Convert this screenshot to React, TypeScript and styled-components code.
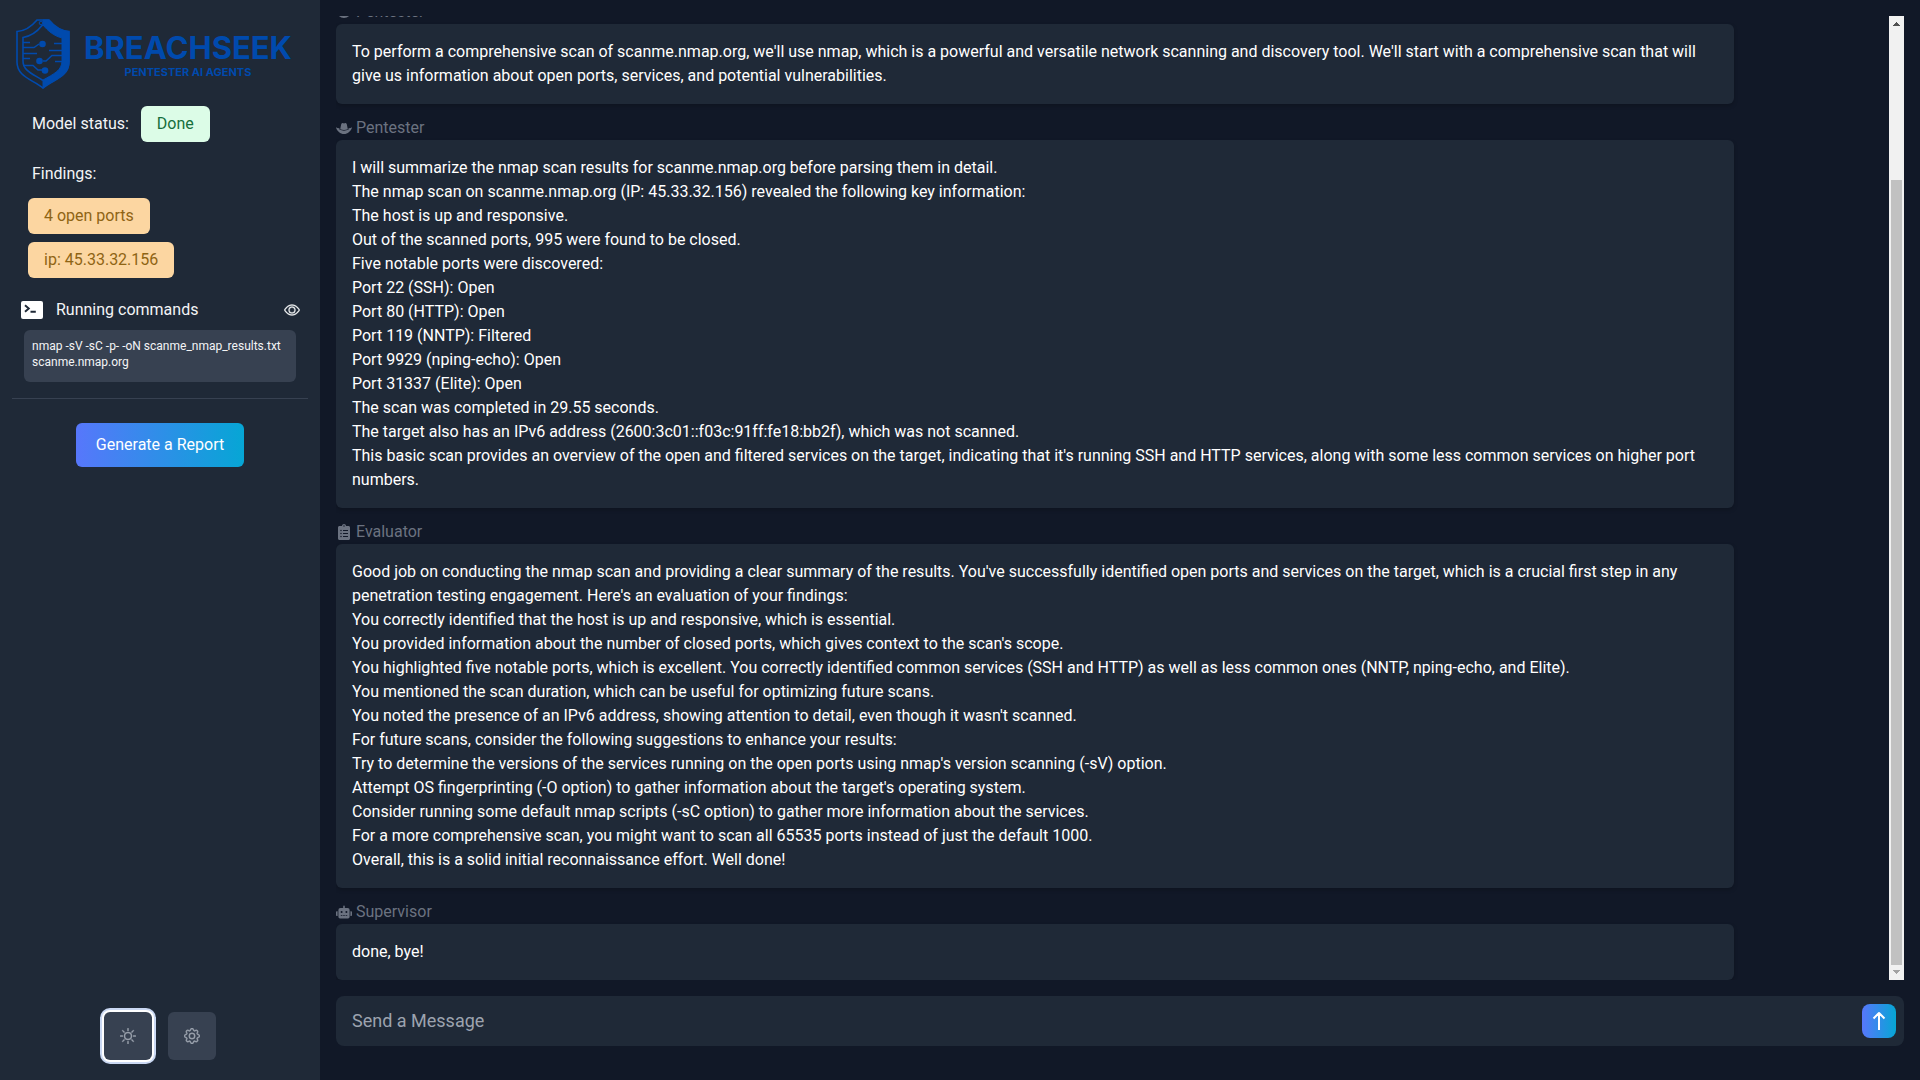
import React, { useLayoutEffect, useRef } from "react";
import styled, { createGlobalStyle } from "styled-components";
import { FaClipboardList, FaRobot } from "react-icons/fa";
import { BsEye, BsGear, BsSun } from "react-icons/bs";

const GlobalStyle = createGlobalStyle`
  *, *::before, *::after { box-sizing: border-box; }
  body { margin: 0; background: #111827; }
  body, button, input { font-family: Roboto, "Liberation Sans", sans-serif; }
  h1, h2, p, ul { margin: 0; padding: 0; font-weight: 400; }
`;

const Page = styled.div`
  display: flex;
  height: 100vh;
  font-size: 16px;
  line-height: 24px;
  color: #f3f4f6;
`;

const Sidebar = styled.aside`
  flex: 0 0 320px;
  display: flex;
  flex-direction: column;
  padding: 16px 12px 20px;
  background: #1f2937;
`;

const Logo = styled.div`
  display: flex;
  align-items: center;
  gap: 14px;
  height: 76px;
  padding-left: 4px;
  color: #004aad;
`;

const LogoText = styled.div`
  display: flex;
  flex-direction: column;
  align-items: center;
  padding-top: 8px;
  font-family: Inter, sans-serif;
`;

const LogoName = styled.h1`
  font-size: 31px;
  line-height: 28px;
  font-weight: 700;
`;

const LogoTagline = styled.p`
  font-size: 11px;
  line-height: 20px;
  font-weight: 700;
`;

const StatusRow = styled.div`
  display: flex;
  align-items: center;
  gap: 12px;
  margin-top: 14px;
  padding-left: 20px;
`;

const Badge = styled.span<{ $tone: "green" | "orange" }>`
  padding: 6px 16px;
  border-radius: 6px;
  background: ${(p) => (p.$tone === "green" ? "#dcfce7" : "#fcd6a1")};
  color: ${(p) => (p.$tone === "green" ? "#166f3c" : "#8f6414")};
`;

const SectionTitle = styled.h2`
  margin-top: 20px;
  padding-left: 20px;
  font-size: 16px;
`;

const Findings = styled.ul`
  display: flex;
  flex-direction: column;
  gap: 8px;
  margin-top: 12px;
  padding-left: 16px;
  list-style: none;
  & > li { display: flex; }
`;

const CommandsHeader = styled.div`
  display: flex;
  align-items: center;
  gap: 13px;
  margin-top: 20px;
  padding: 0 8px 0 9px;
`;

const CommandsTitle = styled.h2`
  flex: 1;
  font-size: 16px;
`;

const IconButton = styled.button`
  display: flex;
  padding: 0;
  border: 0;
  background: none;
  color: inherit;
  font-size: 16px;
  & > svg { stroke-width: 0.3; }
`;

const CommandBox = styled.p`
  margin: 8px 12px 0;
  padding: 8px 8px 12px;
  border-radius: 6px;
  background: #374151;
  font-size: 12px;
  line-height: 16px;
`;

const Divider = styled.hr`
  width: 100%;
  margin: 16px 0 24px;
  border: 0;
  border-top: 1px solid #374151;
`;

const ReportButton = styled.button`
  align-self: center;
  padding: 10px 20px;
  border: 0;
  border-radius: 6px;
  background: linear-gradient(to right, #5777fb, #06a6d5);
  color: #fff;
  font-size: 16px;
  line-height: 24px;
`;

const SidebarFooter = styled.div`
  display: flex;
  justify-content: center;
  gap: 16px;
  margin-top: auto;
`;

const SquareButton = styled.button<{ $active?: boolean }>`
  display: flex;
  align-items: center;
  justify-content: center;
  width: 48px;
  height: 48px;
  border: 0;
  border-radius: 6px;
  background: #374151;
  color: #9ca3af;
  font-size: 16px;
  box-shadow: ${(p) => (p.$active ? "0 0 0 2px #fff, 0 0 0 4px #cad8f3" : "none")};
  & > svg { stroke-width: 0.4; }
`;

const Main = styled.main`
  flex: 1;
  min-width: 0;
  display: flex;
  flex-direction: column;
  gap: 16px;
  padding: 16px 16px 34px;
`;

const ThreadArea = styled.div`
  flex: 1;
  min-height: 0;
  display: flex;
`;

const Thread = styled.div`
  flex: 1;
  min-width: 0;
  overflow-y: scroll;
  scrollbar-width: none;
  padding-top: 152px;
`;

const ScrollRail = styled.div`
  flex: 0 0 15px;
  display: flex;
  flex-direction: column;
  align-items: center;
  padding: 6px 2px;
  background: #f1f1f1;
`;

const ScrollTrack = styled.div`
  flex: 1;
  align-self: stretch;
  display: flex;
  flex-direction: column;
  justify-content: flex-end;
  margin: 5px 2px;
  margin: 5px 0;
`;

const ScrollThumb = styled.div`
  width: 11px;
  height: 84%;
  background: #c1c1c1;
`;

const Message = styled.article`
  width: 90%;
  padding-top: 12px;
`;

const Author = styled.h2`
  display: flex;
  align-items: center;
  gap: 4px;
  font-size: 16px;
  color: #6b7280;
`;

const Bubble = styled.div`
  padding: 16px;
  border-radius: 6px;
  background: #1f2937;
  color: #fff;
  box-shadow: 0 2px 4px rgba(0, 0, 0, 0.2);
`;

const Composer = styled.form`
  display: flex;
  align-items: center;
  padding: 8px 8px 8px 16px;
  border-radius: 8px;
  background: #1f2937;
`;

const MessageInput = styled.input`
  flex: 1;
  min-width: 0;
  padding: 0;
  border: 0;
  outline: 0;
  background: none;
  color: #f3f4f6;
  font-size: 18px;
  line-height: 28px;
  &::placeholder { color: #9ca3af; opacity: 1; }
`;

const SendButton = styled.button`
  display: flex;
  align-items: center;
  justify-content: center;
  width: 34px;
  height: 34px;
  padding: 0;
  border: 0;
  border-radius: 8px;
  background: linear-gradient(to right, #5777fb, #06a6d5);
  color: #fff;
`;

const ShieldLogo = () => (
  <svg width="54" height="70" viewBox="0 0 54 70" fill="none" stroke="currentColor" aria-hidden="true">
    <path
      d="M27 1 H21 C16 7 9 12 1 12.5 V43 C1 57 15 60 27 69 C39 60 53 57 53 43 V12.5 C45 12 38 7 33 1 Z"
      strokeWidth="1.6"
    />
    <path d="M27 1 H33 C38 7 45 12 53 12.5 V43 C53 57 39 60 27 69 V61 C38 55 46 51 46 42 V19 C38 17 32 12 27 6 Z" fill="currentColor" strokeWidth="1" />
    <path d="M28 6 L26 6.5 C21 13 15 17 7 18.5 V42 C7 52 17 55 27 61.5" strokeWidth="1.6" />
    <circle cx="25" cy="4" r="1.8" strokeWidth="1" />
    <path d="M7 23.5 H14 M7 28.5 H18 L23 25 M7 34.5 H21 M7 39.5 H14 M7 46.5 H17 L22 51 H26" strokeWidth="1.5" />
    <path d="M38 24.5 H46 M33 31.5 H46 M27 42 H30 L36 36.5 H46 M39 42.5 H46" strokeWidth="1.5" />
    <g fill="currentColor" stroke="none">
      <circle cx="26.5" cy="25" r="3.3" />
      <circle cx="23.5" cy="42" r="3.3" />
      <circle cx="29" cy="51.5" r="3.3" />
    </g>
  </svg>
);

const TerminalIcon = () => (
  <svg width="22" height="18" viewBox="0 0 22 18" fill="none" aria-hidden="true">
    <rect width="22" height="18" rx="2" fill="#fff" />
    <path d="M4 4.2 L7.8 7.5 L4 10.8 M9.5 10.8 H14.8" stroke="#1f2937" strokeWidth="1.9" />
  </svg>
);

const HatIcon = () => (
  <svg width="16" height="16" viewBox="0 0 16 16" fill="currentColor" aria-hidden="true">
    <path d="M4.2 9.2 L5.2 4.2 Q5.6 3 6.8 3 L8 3.4 L9.2 3 Q10.400 3 10.800 4.2 L11.800 9.2 Q8 10.800 4.2 9.2 Z" />
    <path d="M0 7.200 C1 8.100 2.200 8.400 3.500 8.300 L3.300 9.600 Q8 11.800 12.700 9.600 L12.500 8.300 C13.800 8.400 15 8.100 16 7.200 C15.200 11 11.600 14 8 14 C4.400 14 0.800 11 0 7.200 Z" />
  </svg>
);

const ArrowIcon = () => (
  <svg width="20" height="20" viewBox="0 0 20 20" fill="none" stroke="currentColor" strokeWidth="2" aria-hidden="true">
    <path d="M10 19 V2 M4.5 7.5 L10 2 L15.5 7.5" strokeLinejoin="round" />
  </svg>
);

const ScrollArrow = ({ up }: { up?: boolean }) => (
  <svg width="7" height="4" viewBox="0 0 7 4" fill={up ? "#505050" : "#a3a3a3"} shapeRendering="crispEdges" aria-hidden="true">
    <path d={up ? "M0 4 L3.5 0 L7 4 Z" : "M0 0 L3.5 4 L7 0 Z"} />
  </svg>
);

const icons = {
  Pentester: HatIcon,
  Evaluator: FaClipboardList,
  Supervisor: FaRobot,
};

const messages: { author: keyof typeof icons; lines: string[] }[] = [
  {
    author: "Pentester",
    lines: [
      "To perform a comprehensive scan of scanme.nmap.org, we'll use nmap, which is a powerful and versatile network scanning and discovery tool. We'll start with a comprehensive scan that will give us information about open ports, services, and potential vulnerabilities.",
    ],
  },
  {
    author: "Pentester",
    lines: [
      "I will summarize the nmap scan results for scanme.nmap.org before parsing them in detail.",
      "The nmap scan on scanme.nmap.org (IP: 45.33.32.156) revealed the following key information:",
      "The host is up and responsive.",
      "Out of the scanned ports, 995 were found to be closed.",
      "Five notable ports were discovered:",
      "Port 22 (SSH): Open",
      "Port 80 (HTTP): Open",
      "Port 119 (NNTP): Filtered",
      "Port 9929 (nping-echo): Open",
      "Port 31337 (Elite): Open",
      "The scan was completed in 29.55 seconds.",
      "The target also has an IPv6 address (2600:3c01::f03c:91ff:fe18:bb2f), which was not scanned.",
      "This basic scan provides an overview of the open and filtered services on the target, indicating that it's running SSH and HTTP services, along with some less common services on higher port numbers.",
    ],
  },
  {
    author: "Evaluator",
    lines: [
      "Good job on conducting the nmap scan and providing a clear summary of the results. You've successfully identified open ports and services on the target, which is a crucial first step in any penetration testing engagement. Here's an evaluation of your findings:",
      "You correctly identified that the host is up and responsive, which is essential.",
      "You provided information about the number of closed ports, which gives context to the scan's scope.",
      "You highlighted five notable ports, which is excellent. You correctly identified common services (SSH and HTTP) as well as less common ones (NNTP, nping-echo, and Elite).",
      "You mentioned the scan duration, which can be useful for optimizing future scans.",
      "You noted the presence of an IPv6 address, showing attention to detail, even though it wasn't scanned.",
      "For future scans, consider the following suggestions to enhance your results:",
      "Try to determine the versions of the services running on the open ports using nmap's version scanning (-sV) option.",
      "Attempt OS fingerprinting (-O option) to gather information about the target's operating system.",
      "Consider running some default nmap scripts (-sC option) to gather more information about the services.",
      "For a more comprehensive scan, you might want to scan all 65535 ports instead of just the default 1000.",
      "Overall, this is a solid initial reconnaissance effort. Well done!",
    ],
  },
  { author: "Supervisor", lines: ["done, bye!"] },
];

const findings = ["4 open ports", "ip: 45.33.32.156"];

export default function App() {
  const threadRef = useRef<HTMLDivElement>(null);

  // Keep the newest message in view.
  useLayoutEffect(() => {
    const el = threadRef.current;
    if (el) el.scrollTop = el.scrollHeight;
  }, []);

  return (
    <Page>
      <GlobalStyle />
      <Sidebar>
        <Logo>
          <ShieldLogo />
          <LogoText>
            <LogoName>BREACHSEEK</LogoName>
            <LogoTagline>PENTESTER AI AGENTS</LogoTagline>
          </LogoText>
        </Logo>
        <StatusRow>
          <span>Model status:</span>
          <Badge $tone="green">Done</Badge>
        </StatusRow>
        <SectionTitle>Findings:</SectionTitle>
        <Findings>
          {findings.map((f) => (
            <li key={f}>
              <Badge $tone="orange">{f}</Badge>
            </li>
          ))}
        </Findings>
        <CommandsHeader>
          <TerminalIcon />
          <CommandsTitle>Running commands</CommandsTitle>
          <IconButton type="button" aria-label="Toggle commands">
            <BsEye />
          </IconButton>
        </CommandsHeader>
        <CommandBox>nmap -sV -sC -p- -oN scanme_nmap_results.txt scanme.nmap.org</CommandBox>
        <Divider />
        <ReportButton type="button">Generate a Report</ReportButton>
        <SidebarFooter>
          <SquareButton type="button" aria-label="Toggle theme" $active>
            <BsSun />
          </SquareButton>
          <SquareButton type="button" aria-label="Settings">
            <BsGear />
          </SquareButton>
        </SidebarFooter>
      </Sidebar>
      <Main>
        <ThreadArea>
          <Thread ref={threadRef}>
            {messages.map((m, i) => {
              const Icon = icons[m.author];
              return (
                <Message key={i}>
                  <Author>
                    <Icon />
                    {m.author}
                  </Author>
                  <Bubble>
                    {m.lines.map((line) => (
                      <p key={line}>{line}</p>
                    ))}
                  </Bubble>
                </Message>
              );
            })}
          </Thread>
          <ScrollRail aria-hidden="true">
            <ScrollArrow up />
            <ScrollTrack>
              <ScrollThumb />
            </ScrollTrack>
            <ScrollArrow />
          </ScrollRail>
        </ThreadArea>
        <Composer onSubmit={(e) => e.preventDefault()}>
          <MessageInput type="text" placeholder="Send a Message" aria-label="Send a Message" />
          <SendButton type="submit" aria-label="Send">
            <ArrowIcon />
          </SendButton>
        </Composer>
      </Main>
    </Page>
  );
}
